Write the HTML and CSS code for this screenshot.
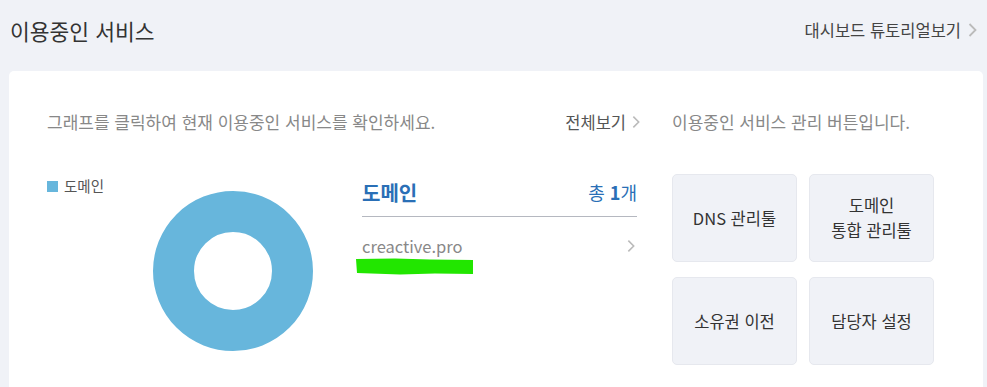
FILE: index.html
```html
<!DOCTYPE html>
<html lang="ko">
<head>
    <meta charset="UTF-8">
    <meta name="viewport" content="width=device-width, initial-scale=1.0">
    <title>이용중인 서비스</title>
    <link rel="stylesheet" href="styles.css">
</head>
<body>
    <div class="page-head">
        <h1>이용중인 서비스</h1>
        <a class="tutorial-link" href="#">대시보드 튜토리얼보기
            <svg class="chev chev-lg" viewBox="0 0 9 14"><polyline points="1.5,1 7.5,7 1.5,13"/></svg>
        </a>
    </div>

    <div class="card">
        <div class="col-main">
            <div class="col-head">
                <p class="desc">그래프를 클릭하여 현재 이용중인 서비스를 확인하세요.</p>
                <a class="all-link" href="#">전체보기
                    <svg class="chev" viewBox="0 0 9 14"><polyline points="1.5,1 7.5,7 1.5,13"/></svg>
                </a>
            </div>

            <div class="chart-body">
                <div class="legend">
                    <span class="legend-box"></span>도메인
                </div>

                <svg class="donut" viewBox="0 0 160 160">
                    <circle cx="80" cy="80" r="59.5" fill="none" stroke="#67b6dc" stroke-width="41"/>
                </svg>

                <div class="svc-list">
                    <div class="svc-head">
                        <span class="svc-name">도메인</span>
                        <span class="svc-count">총 <b>1</b>개</span>
                    </div>
                    <a class="svc-item" href="#">
                        <span>creactive.pro</span>
                        <svg class="chev" viewBox="0 0 9 14"><polyline points="1.5,1 7.5,7 1.5,13"/></svg>
                    </a>
                    <svg class="marker" viewBox="0 0 119 17">
                        <path d="M1 1 L40 0.5 L75 1.5 L118 2 L118 16 L80 15.5 L45 16.5 L2 15 Z" fill="#22e600"/>
                    </svg>
                </div>
            </div>
        </div>

        <div class="col-side">
            <p class="desc">이용중인 서비스 관리 버튼입니다.</p>
            <div class="btn-grid">
                <button class="tool-btn">DNS 관리툴</button>
                <button class="tool-btn">도메인<br>통합 관리툴</button>
                <button class="tool-btn">소유권 이전</button>
                <button class="tool-btn">담당자 설정</button>
            </div>
        </div>
    </div>
</body>
</html>
```

FILE: styles.css
```css
body {
    margin: 0;
    background: #f0f2f7;
    font-family: "Noto Sans CJK KR", "Noto Sans", sans-serif;
    color: #333;
    height: 387px;
    overflow: hidden;
}
a { text-decoration: none; color: inherit; }

.page-head {
    display: flex; justify-content: space-between; align-items: center;
    height: 60px; padding: 0 10px;
}
.page-head h1 { margin: 0; font-size: 21.5px; font-weight: 400; color: #333; }
.tutorial-link { display: flex; align-items: center; gap: 7px; font-size: 16.5px; color: #444; }

.chev { width: 8px; height: 14px; fill: none; stroke: #bbb; stroke-width: 1.8; }
.chev-lg { width: 9px; height: 14px; }

.card {
    display: flex; gap: 32px;
    margin: 11px 4px 0 9px;
    padding: 39px 0 0 38px;
    background: #fff; border-radius: 5px;
    height: 400px;
}
.desc { margin: 0; font-size: 17px; line-height: 24px; color: #888; }

.col-main { width: 593px; }
.col-head { display: flex; justify-content: space-between; align-items: center; }
.all-link { display: flex; align-items: center; gap: 6px; font-size: 16.5px; color: #555; }

.chart-body { display: flex; margin-top: 40px; }
.legend { width: 106px; font-size: 14.5px; line-height: 24px; color: #555; display: flex; align-items: center; height: 24px; }
.legend-box { width: 11px; height: 11px; background: #67b6dc; margin-right: 6px; }
.donut { width: 160px; height: 160px; margin-top: 17px; }

.svc-list { width: 275px; margin-left: 49px; margin-top: 5px; }
.svc-head {
    display: flex; justify-content: space-between; align-items: center;
    height: 26px; padding-bottom: 11px; border-bottom: 1px solid #b5b8c0;
    color: #2a6fb6;
}
.svc-name { font-size: 20px; font-weight: 700; }
.svc-count { font-size: 18px; }
.svc-count b { font-weight: 700; }
.svc-item {
    display: flex; justify-content: space-between; align-items: center;
    margin-top: 17px; padding-right: 2px;
    font-size: 16.5px; line-height: 24px; color: #888;
}
.marker { display: block; width: 119px; height: 17px; margin: 0 0 0 -7px; }

.col-side .btn-grid {
    display: grid; grid-template-columns: 125px 125px; grid-auto-rows: 88px;
    column-gap: 12px; row-gap: 15px; margin-top: 40px;
}
.tool-btn {
    background: #f0f2f7; border: 1px solid #e6e8ee; border-radius: 5px;
    font-family: inherit; font-size: 16.5px; line-height: 25px; color: #333;
    cursor: pointer;
}
```
